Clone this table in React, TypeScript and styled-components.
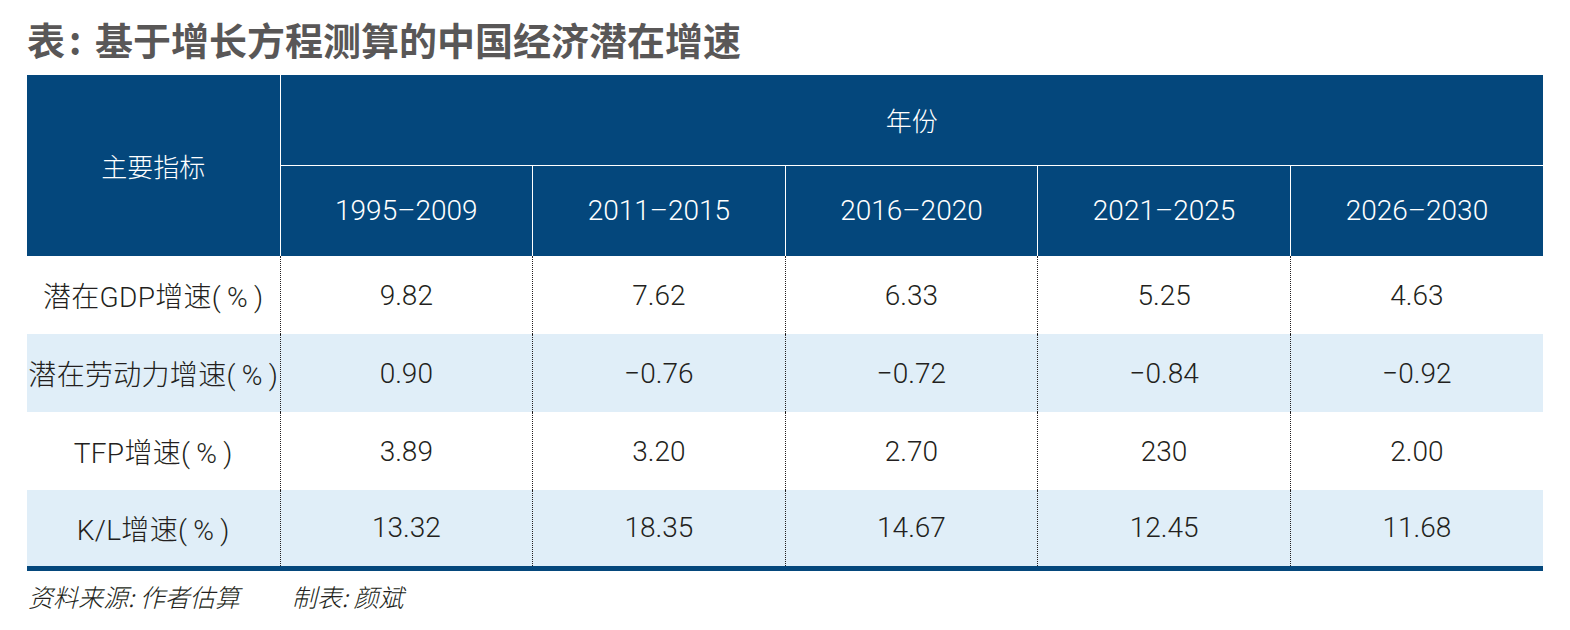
import styled, { createGlobalStyle } from "styled-components";

const GlobalStyle = createGlobalStyle`
  html, body {
    margin: 0;
    padding: 0;
    background: #ffffff;
  }
`;

const years = ["1995–2009", "2011–2015", "2016–2020", "2021–2025", "2026–2030"];

const pct = "(\u2009%\u2009)";

const rows = [
  { label: "潜在GDP增速" + pct, values: ["9.82", "7.62", "6.33", "5.25", "4.63"] },
  { label: "潜在劳动力增速" + pct, values: ["0.90", "−0.76", "−0.72", "−0.84", "−0.92"] },
  { label: "TFP增速" + pct, values: ["3.89", "3.20", "2.70", "230", "2.00"] },
  { label: "K/L增速" + pct, values: ["13.32", "18.35", "14.67", "12.45", "11.68"] },
];

export default function App() {
  return (
    <Page>
      <GlobalStyle />
      <Title>
        表<Colon>:</Colon>基于增长方程测算的中国经济潜在增速
      </Title>
      <Table>
        <colgroup>
          <col style={{ width: 253 }} />
          {years.map((y) => (
            <col key={y} />
          ))}
        </colgroup>
        <thead>
          <HeadRow $height={90}>
            <HeadCell rowSpan={2} $first>
              主要指标
            </HeadCell>
            <HeadCell colSpan={5} $groupTop>
              年份
            </HeadCell>
          </HeadRow>
          <HeadRow $height={91}>
            {years.map((y) => (
              <HeadCell key={y} $number>
                {y}
              </HeadCell>
            ))}
          </HeadRow>
        </thead>
        <tbody>
          {rows.map((r, i) => (
            <BodyRow key={r.label} $shaded={i % 2 === 1}>
              <LabelCell>{r.label}</LabelCell>
              {r.values.map((v, j) => (
                <ValueCell key={j}>{v}</ValueCell>
              ))}
            </BodyRow>
          ))}
        </tbody>
      </Table>
      <Footer>
        <span>资料来源: 作者估算</span>
        <span>制表: 颜斌</span>
      </Footer>
    </Page>
  );
}

const Page = styled.div`
  width: 1516px;
  padding: 14px 0 0 27px;
  font-family: "Noto Sans CJK SC", sans-serif;
`;

const Title = styled.div`
  font-family: "Noto Sans CJK SC", sans-serif;
  font-weight: 700;
  font-size: 38px;
  line-height: 50px;
  color: #595757;
  height: 61px;
`;

const Colon = styled.span`
  display: inline-block;
  width: 30px;
  padding-left: 4px;
  box-sizing: border-box;
`;

const Table = styled.table`
  width: 1516px;
  border-collapse: collapse;
  table-layout: fixed;
  border-bottom: 5px solid #04477c;
`;

const HeadRow = styled.tr<{ $height: number }>`
  height: ${(p) => p.$height}px;
  background: #04477c;
`;

const HeadCell = styled.th<{ $first?: boolean; $groupTop?: boolean; $number?: boolean }>`
  padding: 0;
  color: #ffffff;
  font-weight: 300;
  text-align: center;
  vertical-align: middle;
  font-family: ${(p) =>
    p.$number ? `Roboto, "Liberation Sans", sans-serif` : `"Noto Sans CJK SC", sans-serif`};
  font-size: ${(p) => (p.$number ? "28px" : "26px")};
  border-left: ${(p) => (p.$first ? "none" : "1px solid #ffffff")};
  border-bottom: ${(p) => (p.$groupTop ? "1px solid #ffffff" : "none")};
`;

const BodyRow = styled.tr<{ $shaded: boolean }>`
  height: 78px;
  background: ${(p) => (p.$shaded ? "#e0eef8" : "#ffffff")};
`;

const LabelCell = styled.td`
  padding: 0;
  text-align: center;
  vertical-align: middle;
  color: #231f20;
  font-family: Roboto, "Noto Sans CJK SC", sans-serif;
  font-weight: 300;
  font-size: 28px;
  letter-spacing: 0.3px;
  white-space: nowrap;
`;

const ValueCell = styled.td`
  padding: 0;
  text-align: center;
  vertical-align: middle;
  color: #231f20;
  font-family: Roboto, "Liberation Sans", sans-serif;
  font-weight: 300;
  font-size: 28px;
  border-left: 1px dotted #231f20;
`;

const Footer = styled.div`
  display: flex;
  gap: 52px;
  margin-top: 8px;
  margin-left: 1px;
  font-family: "Noto Sans CJK SC", sans-serif;
  font-style: italic;
  font-weight: 300;
  font-size: 25px;
  line-height: 34px;
  color: #231f20;
`;
